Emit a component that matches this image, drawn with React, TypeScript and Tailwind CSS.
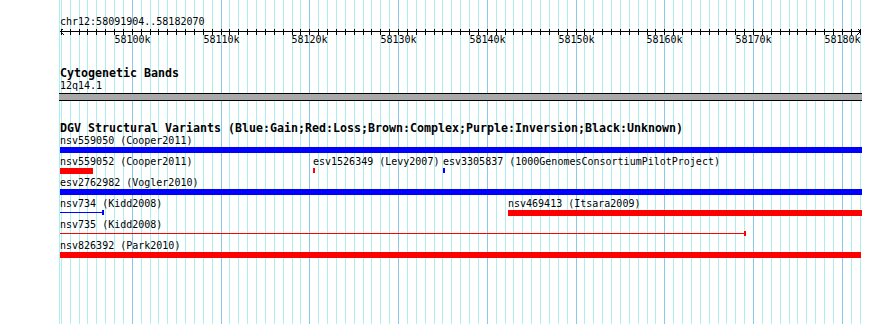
import React from 'react';

// viewport: chr12:58091904..58182070 drawn across 800px starting at x=60
const START = 58091904;
const END = 58182070;
const ORIGIN = 60.45;
const PX_PER_BP = 0.008875;

const toX = (bp: number) => ORIGIN + (bp - START) * PX_PER_BP;

const KB_MARKS: number[] = [];
for (let k = Math.ceil(START / 1000); k * 1000 <= END; k++) KB_MARKS.push(k);

type Feature = {
  name: string;
  left: number;
  width: number;
  color: 'red' | 'blue';
  kind: 'bar' | 'line' | 'tick';
};

// one row = one line of labels + glyphs under it
const ROWS: Feature[][] = [
  [{ name: 'nsv559050 (Cooper2011)', left: 0, width: 802, color: 'blue', kind: 'bar' }],
  [
    { name: 'nsv559052 (Cooper2011)', left: 0, width: 33, color: 'red', kind: 'bar' },
    { name: 'esv1526349 (Levy2007)', left: 253, width: 2, color: 'red', kind: 'tick' },
    { name: 'esv3305837 (1000GenomesConsortiumPilotProject)', left: 383, width: 2, color: 'blue', kind: 'tick' },
  ],
  [{ name: 'esv2762982 (Vogler2010)', left: 0, width: 802, color: 'blue', kind: 'bar' }],
  [
    { name: 'nsv734 (Kidd2008)', left: 0, width: 44, color: 'blue', kind: 'line' },
    { name: 'nsv469413 (Itsara2009)', left: 448, width: 354, color: 'red', kind: 'bar' },
  ],
  [{ name: 'nsv735 (Kidd2008)', left: 0, width: 686, color: 'red', kind: 'line' }],
  [{ name: 'nsv826392 (Park2010)', left: 0, width: 801, color: 'red', kind: 'bar' }],
];

function GridLayer() {
  return (
    <svg className="absolute inset-0" width={890} height={324} aria-hidden="true">
      <line x1={59.5} y1={0} x2={59.5} y2={324} stroke="#afeeee" />
      {KB_MARKS.map((k) => {
        const x = Math.floor(toX(k * 1000)) + 0.5;
        const major = k % 10 === 0;
        return <line key={k} x1={x} y1={0} x2={x} y2={324} stroke={major ? '#87c8ec' : '#afeeee'} />;
      })}
    </svg>
  );
}

function Ruler() {
  return (
    <div className="relative h-[19px] w-[802px]">
      <svg className="absolute left-[-60px] top-[1px]" width={890} height={8} aria-hidden="true">
        <line x1={60} y1={2.5} x2={860.5} y2={2.5} stroke="#000" />
        <polyline points="64,-1 60.5,2.5 64,6" fill="none" stroke="#000" />
        <polyline points="857,-1 860.5,2.5 857,6" fill="none" stroke="#000" />
        {KB_MARKS.map((k) => {
          const x = Math.floor(toX(k * 1000)) + 0.5;
          return <line key={k} x1={x} y1={0} x2={x} y2={6} stroke="#000" />;
        })}
      </svg>
      {KB_MARKS.filter((k) => k % 10 === 0).map((k) => (
        <span
          key={k}
          className="absolute top-[5px] -translate-x-1/2"
          style={{ left: Math.floor(toX(k * 1000)) - 59.5 }}
        >
          {k}k
        </span>
      ))}
    </div>
  );
}

function FeatureRow({ features }: { features: Feature[] }) {
  return (
    <div className="relative h-[21px] w-[802px]">
      {features.map((f) => {
        const bg = f.color === 'red' ? 'bg-[#ff0000]' : 'bg-[#0000ff]';
        return (
          <React.Fragment key={f.name}>
            <span className="absolute top-0 whitespace-pre" style={{ left: f.left }}>
              {f.name}
            </span>
            {f.kind === 'line' ? (
              <>
                <div className={`absolute top-[15px] h-[1px] ${bg}`} style={{ left: f.left, width: f.width }} />
                <div className={`absolute top-[13px] h-[5px] w-[2px] ${bg}`} style={{ left: f.left + f.width - 2 }} />
              </>
            ) : (
              <div
                className={`absolute top-[13px] ${f.kind === 'bar' ? 'h-[6px]' : 'h-[5px]'} ${bg}`}
                style={{ left: f.left, width: f.width }}
              />
            )}
          </React.Fragment>
        );
      })}
    </div>
  );
}

export default function App() {
  return (
    <div className="relative h-[324px] w-[890px] overflow-hidden bg-white font-['DejaVu_Sans_Mono',monospace] text-[10px] leading-[13px] text-black">
      <GridLayer />
      <div className="relative flex flex-col pl-[60px]">
        <div className="mt-[15px] whitespace-pre">chr12:58091904..58182070</div>
        <Ruler />

        <div className="mt-[21px] text-[11.63px] font-bold leading-[11px]">Cytogenetic Bands</div>
        <div>12q14.1</div>
        <div className="-ml-[1px] mt-[1px] h-[8px] w-[803px] border-y border-black bg-[#a9a9a9]" />

        <div className="mt-[21px] whitespace-pre text-[11.63px] font-bold leading-[12px]">
          DGV Structural Variants (Blue:Gain;Red:Loss;Brown:Complex;Purple:Inversion;Black:Unknown)
        </div>
        {ROWS.map((row, i) => (
          <FeatureRow key={i} features={row} />
        ))}
      </div>
    </div>
  );
}
